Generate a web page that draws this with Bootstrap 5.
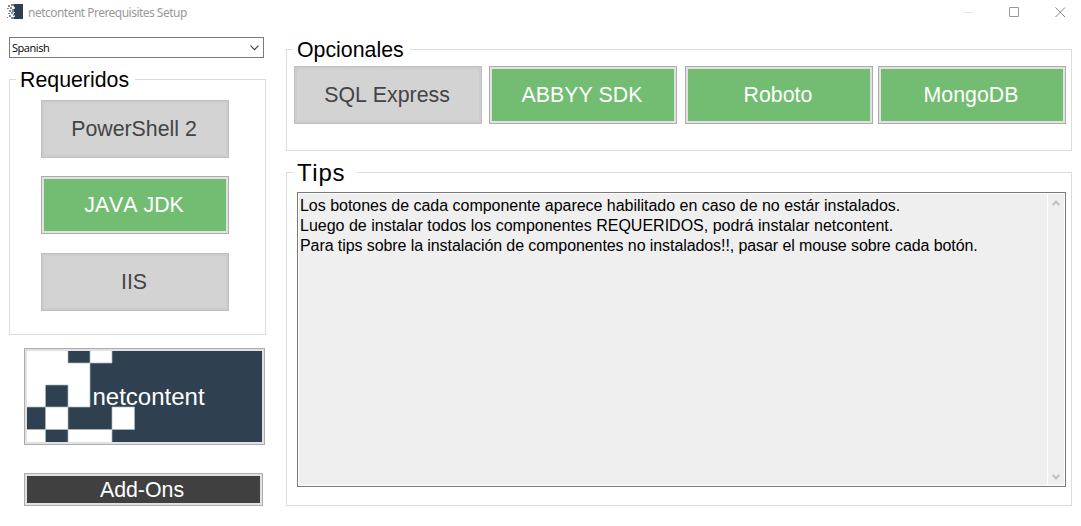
<!DOCTYPE html>
<html lang="es">
<head>
    <meta charset="UTF-8">
    <meta name="viewport" content="width=device-width, initial-scale=1.0">
    <title>netcontent Prerequisites Setup</title>
    <link rel="stylesheet" href="https://cdn.jsdelivr.net/npm/bootstrap@5.3.3/dist/css/bootstrap.min.css">
    <style>
        body { font-family: "Liberation Sans", Arial, sans-serif; font-kerning: none; color: #000; background: #fff; height: 526px; }
        .titlebar { height: 37px; padding: 3px 15px 0 7px; }
        .titlebar-text { font: 12px/18px "Noto Sans", "Open Sans", sans-serif; color: #999; letter-spacing: -.52px; margin: 1px 0 0 5px; }
        .window-controls { gap: 35px; }
        .content { padding: 0 9px; gap: 20px; }
        .side { width: 257px; }
        .lang { width: 255px; height: 21px; border: 1px solid #7a7a7a; border-radius: 0; padding: 0 4px 0 2px; background: #fff; color: #000;
            font: 11px/19px "Open Sans", "Noto Sans", sans-serif; letter-spacing: -.45px; }
        .lang span { margin-top: -1px; }
        .group { border: 1px solid #dcdcdc; }
        .group legend { font-size: 21.33px; line-height: 27px; height: 25px; margin: 0 0 0 6px; padding: 0 6px 0 4px; }
        .group-required { height: 268px; margin-top: 9px; }
        .group-required .stack { padding: 8px 0 0 31px; }
        .group-required .java { margin: 18px 0 19px; }
        .group-optional { height: 114px; }
        .group-optional .btn + .btn { margin-left: 7px; }
        .group-optional .btn:nth-child(3) { margin-left: 8px; }
        .group-optional .btn:nth-child(4) { margin-left: 5px; }
        .group-optional .line { padding: 4px 0 0 7px; }
        .group-tips { height: 346px; margin-top: 9px; }
        .group-tips legend { font-size: 24px; line-height: 26px; letter-spacing: .7px; padding-right: 12px; }
        .setup { width: 188px; height: 58px; border: 1px solid #adadad; border-radius: 0; padding: 0 2px 0 0; font-size: 21.33px; line-height: 56px;
            font-kerning: none; color: #fff; background: #73bd73; box-shadow: inset 0 0 0 2px #e1e1e1; }
        .setup:disabled { opacity: 1; color: #444; background: #d3d3d3; border-color: #bfbfbf; box-shadow: inset 0 0 0 2px #cccccc; }
        .launch { width: 241px; height: 97px; margin: 13px 0 0 15px; background: #2f4050; font-size: 24px; line-height: 95px; padding-left: 10px; }
        .launch svg { left: 2px; top: 2px; }
        .launch span { position: relative; }
        .addons { width: 239px; height: 33px; margin: 28px 0 0 15px; background: #404040; line-height: 33px; padding-right: 3px; }
        .tips-box { width: 769px; height: 295px; margin: 7px 0 0 10px; border: 1px solid #7a7a7a; padding: 1px; }
        .tips-text { background: #efefef; font-size: 16px; line-height: 20px; padding: 2px 1px 1px; }
        .tips-text div:nth-child(1) { letter-spacing: -.024px; }
        .tips-text div:nth-child(3) { letter-spacing: -.085px; }
        .tips-scroll { width: 16px; background: #efefef; margin-left: 1px; padding: 6px 0 5px; }
    </style>
    <script src="https://cdn.jsdelivr.net/npm/bootstrap@5.3.3/dist/js/bootstrap.bundle.min.js"></script>
</head>
<body class="overflow-hidden">
    <header class="titlebar d-flex align-items-start">
        <svg width="16" height="17" viewBox="0 0 16 17">
            <path fill="#2f4050" d="M7 1h9v15H7z"/>
            <path fill="#7d8a94" d="M1 2h2v2H1zM4 1h3v2H4zM3 4h2v2H3zM0 5h2v1H0zM5 6h2v3H5zM2 7h2v2H2zM1 10h2v1H1zM4 9h2v2H4zM6 11h1v2H6zM2 12h2v2H2zM4 14h3v2H4zM0 14h1v1H0z"/>
            <path fill="#c5cdd2" d="M7 4h1v2H7zM6 9h2v1H6zM7 12h1v2H7z"/>
        </svg>
        <span class="titlebar-text text-nowrap">netcontent Prerequisites Setup</span>
        <div class="window-controls d-flex ms-auto mt-1">
            <svg width="10" height="11"><path d="M0 5.5h10" stroke="#e5e5e5"/></svg>
            <svg width="11" height="11"><path d="M.5.5h9v9h-9z" fill="none" stroke="#999"/></svg>
            <svg width="11" height="11"><path d="M.5.5l9.500 9.500M10 .5L.5 10" stroke="#888"/></svg>
        </div>
    </header>
    <main class="content d-flex">
        <section class="side flex-shrink-0">
            <button type="button" class="lang d-flex justify-content-between align-items-center">
                <span>Spanish</span>
                <svg width="9" height="6"><path d="M.5.7l4 4 4-4" fill="none" stroke="#444" stroke-width="1.2"/></svg>
            </button>
            <fieldset class="group group-required">
                <legend class="float-none w-auto">Requeridos</legend>
                <div class="stack d-flex flex-column">
                    <button class="btn setup" disabled>PowerShell 2</button>
                    <button class="btn setup java">JAVA JDK</button>
                    <button class="btn setup" disabled>IIS</button>
                </div>
            </fieldset>
            <button class="btn setup launch d-block position-relative">
                <svg class="position-absolute" width="235" height="91" viewBox="0 0 235 91">
                    <path fill="#fff" stroke="#a9bcc0" stroke-width=".7" d="M-1-1H41V12H63V56H41V34H18.500V56H-1zM63-1H85V12H63zM18.500 56H41V78.500H18.500zM85 56H107.500V78.500H85zM-1 78.500H18.500V92H-1zM41 78.500H85V92H41z"/>
                </svg>
                <span>netcontent</span>
            </button>
            <button class="btn setup addons d-block">Add-Ons</button>
        </section>
        <section class="flex-grow-1">
            <fieldset class="group group-optional">
                <legend class="float-none w-auto">Opcionales</legend>
                <div class="line d-flex">
                    <button class="btn setup" disabled>SQL Express</button>
                    <button class="btn setup">ABBYY SDK</button>
                    <button class="btn setup">Roboto</button>
                    <button class="btn setup">MongoDB</button>
                </div>
            </fieldset>
            <fieldset class="group group-tips">
                <legend class="float-none w-auto">Tips</legend>
                <div class="tips-box d-flex">
                    <div class="tips-text flex-grow-1">
                        <div>Los botones de cada componente aparece habilitado en caso de no estár instalados.</div>
                        <div>Luego de instalar todos los componentes REQUERIDOS, podrá instalar netcontent.</div>
                        <div>Para tips sobre la instalación de componentes no instalados!!, pasar el mouse sobre cada botón.</div>
                    </div>
                    <div class="tips-scroll d-flex flex-column justify-content-between align-items-center">
                        <svg width="8" height="6"><path d="M.7 5L4 1.500 7.300 5" fill="none" stroke="#bfbfbf" stroke-width="2"/></svg>
                        <svg width="8" height="6"><path d="M.7 1L4 4.500 7.300 1" fill="none" stroke="#bfbfbf" stroke-width="2"/></svg>
                    </div>
                </div>
            </fieldset>
        </section>
    </main>
</body>
</html>
